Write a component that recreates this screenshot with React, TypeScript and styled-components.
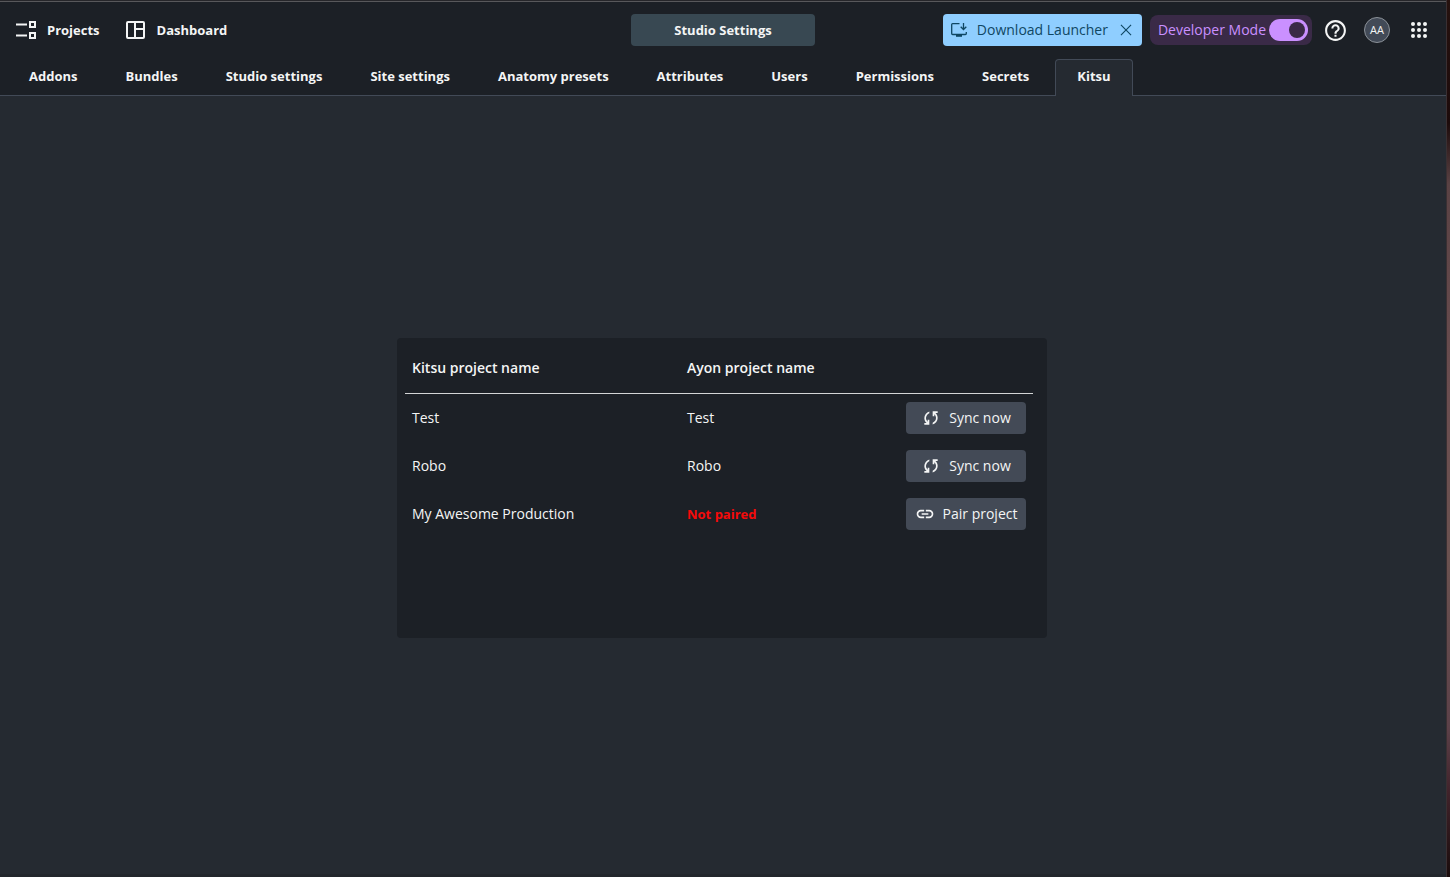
import React, { useState } from "react";
import styled, { createGlobalStyle } from "styled-components";
import { MdHelpOutline } from "react-icons/md";

const color = {
  header: "#1c2026",
  page: "#252a31",
  line: "#424a57",
  button: "#434a56",
  text: "#f4f5f5",
  blue: "#8fceff",
  onBlue: "#0f4763",
  purple: "#ca90ff",
  purpleDark: "#3a2a47",
};

const GlobalStyle = createGlobalStyle`
  *, *::before, *::after { box-sizing: border-box; }
  body {
    margin: 0;
    background: ${color.page};
    color: ${color.text};
    font-family: "Open Sans", "Noto Sans", sans-serif;
    font-size: 14px;
    line-height: 20px;
  }
  button, input { font: inherit; color: inherit; }
  button { border: 0; background: none; padding: 0; cursor: pointer; }
  svg { display: block; flex: none; }
`;

const Desktop = styled.div`
  display: grid;
  grid-template-columns: minmax(0, 1fr) 4px;
  min-height: 100vh;
`;

const Wallpaper = styled.div`
  border-left: 1px solid #3a3033;
  background: linear-gradient(
    #26120f 0%, #1d0b0b 14%, #5a4244 21%, #6b4e50 45%,
    #6b5250 64%, #5c4149 83%, #42242c 90%, #1a0c0c 100%
  );
`;

const AppWindow = styled.div`
  display: flex;
  flex-direction: column;
  min-width: 0;
  background: ${color.page};
  border-bottom: 3px solid #22262c;
`;

const Header = styled.header`
  background: ${color.header};
  border-bottom: 1px solid ${color.line};
`;

const WindowEdge = styled.div`
  height: 2px;
  background: #26262a;
  border-bottom: 1px solid #58585b;
`;

const TopBar = styled.div`
  display: grid;
  grid-template-columns: 1fr auto 1fr;
  align-items: center;
  height: 56px;
  padding: 0 12px;
`;

const MainNav = styled.nav`
  display: flex;
  gap: 20px;
`;

const NavLink = styled.a`
  display: flex;
  align-items: center;
  gap: 9px;
  padding: 0 2px;
  color: inherit;
  text-decoration: none;
  font-size: 13px;
  font-weight: 700;
`;

const ContextButton = styled.button`
  width: 184px;
  height: 32px;
  border-radius: 4px;
  background: #384852;
  font-size: 13px;
  font-weight: 700;
`;

const Actions = styled.div`
  display: flex;
  align-items: center;
  justify-content: flex-end;
  gap: 8px;
`;

const LauncherBanner = styled.div`
  display: flex;
  align-items: center;
  height: 32px;
  padding: 0 6px;
  gap: 8px;
  border-radius: 4px;
  background: ${color.blue};
  color: ${color.onBlue};
`;

const LauncherButton = styled.button`
  display: flex;
  align-items: center;
  gap: 8px;
  white-space: nowrap;
`;

const DeveloperMode = styled.label`
  display: flex;
  align-items: center;
  gap: 3px;
  height: 30px;
  padding: 0 4px 0 8px;
  border-radius: 8px;
  background: ${color.purpleDark};
  color: ${color.purple};
  white-space: nowrap;
  cursor: pointer;
`;

const Switch = styled.input`
  appearance: none;
  display: flex;
  align-items: center;
  width: 39px;
  height: 22px;
  margin: 0;
  padding: 0 3px;
  border-radius: 11px;
  background: #5b4a68;
  cursor: pointer;

  &::before {
    content: "";
    width: 16px;
    height: 16px;
    border-radius: 50%;
    background: ${color.purpleDark};
  }
  &:checked {
    justify-content: flex-end;
    background: ${color.purple};
  }
`;

const IconGroup = styled.div`
  display: flex;
  gap: 12px;
`;

const IconButton = styled.button`
  display: grid;
  place-items: center;
  width: 30px;
  height: 32px;
`;

const Avatar = styled.span`
  display: grid;
  place-items: center;
  width: 26px;
  height: 26px;
  border: 1px solid #8b9198;
  border-radius: 50%;
  background: ${color.line};
  font-size: 11px;
  line-height: 16px;
`;

const Tabs = styled.nav`
  display: flex;
  gap: 4px;
  padding: 1px 7px 0;
`;

const Tab = styled.a<{ $active?: boolean }>`
  height: 37px;
  margin-bottom: -1px;
  padding: 6px 21px;
  border: 1px solid ${(p) => (p.$active ? color.line : "transparent")};
  border-bottom: 0;
  border-radius: 4px 4px 0 0;
  background: ${(p) => (p.$active ? color.page : "transparent")};
  color: inherit;
  text-decoration: none;
  white-space: nowrap;
  font-size: 13px;
  font-weight: 700;
`;

const Main = styled.main`
  flex: 1;
  display: flex;
  align-items: center;
  justify-content: center;
  padding: 6px 2px 0 0;
`;

const Card = styled.section`
  width: 650px;
  min-height: 300px;
  padding: 8px 14px 8px 8px;
  border-radius: 4px;
  background: ${color.header};
`;

const Table = styled.table`
  width: 100%;
  border-collapse: separate;
  border-spacing: 0;
  table-layout: fixed;
`;

const HeadCell = styled.th<{ $width?: number }>`
  width: ${(p) => (p.$width ? `${p.$width}px` : "auto")};
  height: 48px;
  padding: 0 7px 3px;
  border-bottom: 1px solid #d3d5d6;
  text-align: left;
  font-weight: 600;
`;

const Cell = styled.td`
  height: 48px;
  padding: 0 7px;
`;

const NotPaired = styled.strong`
  color: #f50a0a;
  font-weight: 700;
  font-size: 13px;
`;

const RowButton = styled.button`
  display: flex;
  align-items: center;
  justify-content: center;
  gap: 8px;
  width: 120px;
  height: 32px;
  border-radius: 4px;
  background: ${color.button};
  white-space: nowrap;
`;

const symbols = {
  sync: "M160-160v-80h110l-16-14q-52-46-73-105t-21-119q0-111 66.5-197.5T400-790v84q-72 26-116 88.5T240-478q0 45 17 87.5t53 78.5l10 10v-98h80v240H160Zm400-10v-84q72-26 116-88.5T720-482q0-45-17-87.5T650-648l-10-10v98h-80v-240h240v80H690l16 14q49 49 71.5 106.5T800-482q0 111-66.5 197.5T560-170Z",
  link: "M440-280H280q-83 0-141.5-58.5T80-480q0-83 58.5-141.5T280-680h160v80H280q-50 0-85 35t-35 85q0 50 35 85t85 35h160v80ZM320-440v-80h320v80H320Zm200 160v-80h160q50 0 85-35t35-85q0-50-35-85t-85-35H520v-80h160q83 0 141.5 58.5T880-480q0 83-58.5 141.5T680-280H520Z",
  close: "m256-218-38-38 224-224-224-224 38-38 224 224 224-224 38 38-224 224 224 224-38 38-224-224-224 224Z",
};

const Symbol = ({ name }: { name: keyof typeof symbols }) => (
  <svg width="20" height="20" viewBox="0 -960 960 960" fill="currentColor" aria-hidden="true">
    <path d={symbols[name]} />
  </svg>
);

const ProjectsIcon = () => (
  <svg width="24" height="24" viewBox="0 0 24 24" fill="none" stroke="currentColor" strokeWidth="2" aria-hidden="true">
    <path d="M2 6.5h11M2 17.5h11" />
    <path d="M16 4h5v5h-5zM16 15h5v5h-5z" />
  </svg>
);

const DashboardIcon = () => (
  <svg width="24" height="24" viewBox="0 0 24 24" fill="none" stroke="currentColor" strokeWidth="2" aria-hidden="true">
    <rect x="3" y="4" width="17" height="16" rx="1" />
    <path d="M11 4v16M11 11h9" />
  </svg>
);

const InstallIcon = () => (
  <svg width="20" height="20" viewBox="0 0 20 20" fill="none" stroke="currentColor" strokeWidth="1.3" aria-hidden="true">
    <path d="M10.5 3.7H3.6Q2.7 3.7 2.7 4.6v9Q2.7 14.5 3.6 14.5h12.8q.9 0 .9-.9V12" />
    <path d="M14.5 3v6.2M11.7 6.7l2.8 2.8 2.8-2.8" />
    <path d="M7 14.5h6v2.3H7z" fill="currentColor" stroke="none" />
  </svg>
);

const AppsIcon = () => (
  <svg width="24" height="24" viewBox="0 0 24 24" fill="currentColor" aria-hidden="true">
    {[6, 12, 18].map((y) => [6, 12, 18].map((x) => <circle key={`${x}-${y}`} cx={x} cy={y} r="2" />))}
  </svg>
);

const tabs = [
  "Addons", "Bundles", "Studio settings", "Site settings", "Anatomy presets",
  "Attributes", "Users", "Permissions", "Secrets", "Kitsu",
];

const projects = [
  { kitsu: "Test", ayon: "Test" },
  { kitsu: "Robo", ayon: "Robo" },
  { kitsu: "My Awesome Production", ayon: null },
];

export default function App() {
  const [developer, setDeveloper] = useState(true);

  return (
    <Desktop>
      <GlobalStyle />
      <AppWindow>
        <Header>
          <WindowEdge />
          <TopBar>
            <MainNav aria-label="Main">
              <NavLink href="#projects"><ProjectsIcon />Projects</NavLink>
              <NavLink href="#dashboard"><DashboardIcon />Dashboard</NavLink>
            </MainNav>
            <ContextButton type="button">Studio Settings</ContextButton>
            <Actions>
              <LauncherBanner>
                <LauncherButton type="button"><InstallIcon />Download Launcher</LauncherButton>
                <button type="button" aria-label="Dismiss"><Symbol name="close" /></button>
              </LauncherBanner>
              <DeveloperMode>
                Developer Mode
                <Switch
                  type="checkbox"
                  checked={developer}
                  onChange={(e) => setDeveloper(e.target.checked)}
                />
              </DeveloperMode>
              <IconGroup>
                <IconButton type="button" aria-label="Help"><MdHelpOutline size={25} /></IconButton>
                <IconButton type="button" aria-label="Account"><Avatar>AA</Avatar></IconButton>
                <IconButton type="button" aria-label="Apps"><AppsIcon /></IconButton>
              </IconGroup>
            </Actions>
          </TopBar>
          <Tabs aria-label="Settings">
            {tabs.map((name) => (
              <Tab key={name} href={`#${name.replace(" ", "-")}`} $active={name === "Kitsu"}>{name}</Tab>
            ))}
          </Tabs>
        </Header>
        <Main>
          <Card>
            <Table>
              <thead>
                <tr>
                  <HeadCell scope="col" $width={275}>Kitsu project name</HeadCell>
                  <HeadCell scope="col">Ayon project name</HeadCell>
                  <HeadCell scope="col" $width={134} aria-label="Action" />
                </tr>
              </thead>
              <tbody>
                {projects.map(({ kitsu, ayon }) => (
                  <tr key={kitsu}>
                    <Cell>{kitsu}</Cell>
                    <Cell>{ayon ?? <NotPaired>Not paired</NotPaired>}</Cell>
                    <Cell>
                      <RowButton type="button">
                        <Symbol name={ayon ? "sync" : "link"} />
                        {ayon ? "Sync now" : "Pair project"}
                      </RowButton>
                    </Cell>
                  </tr>
                ))}
              </tbody>
            </Table>
          </Card>
        </Main>
      </AppWindow>
      <Wallpaper />
    </Desktop>
  );
}
